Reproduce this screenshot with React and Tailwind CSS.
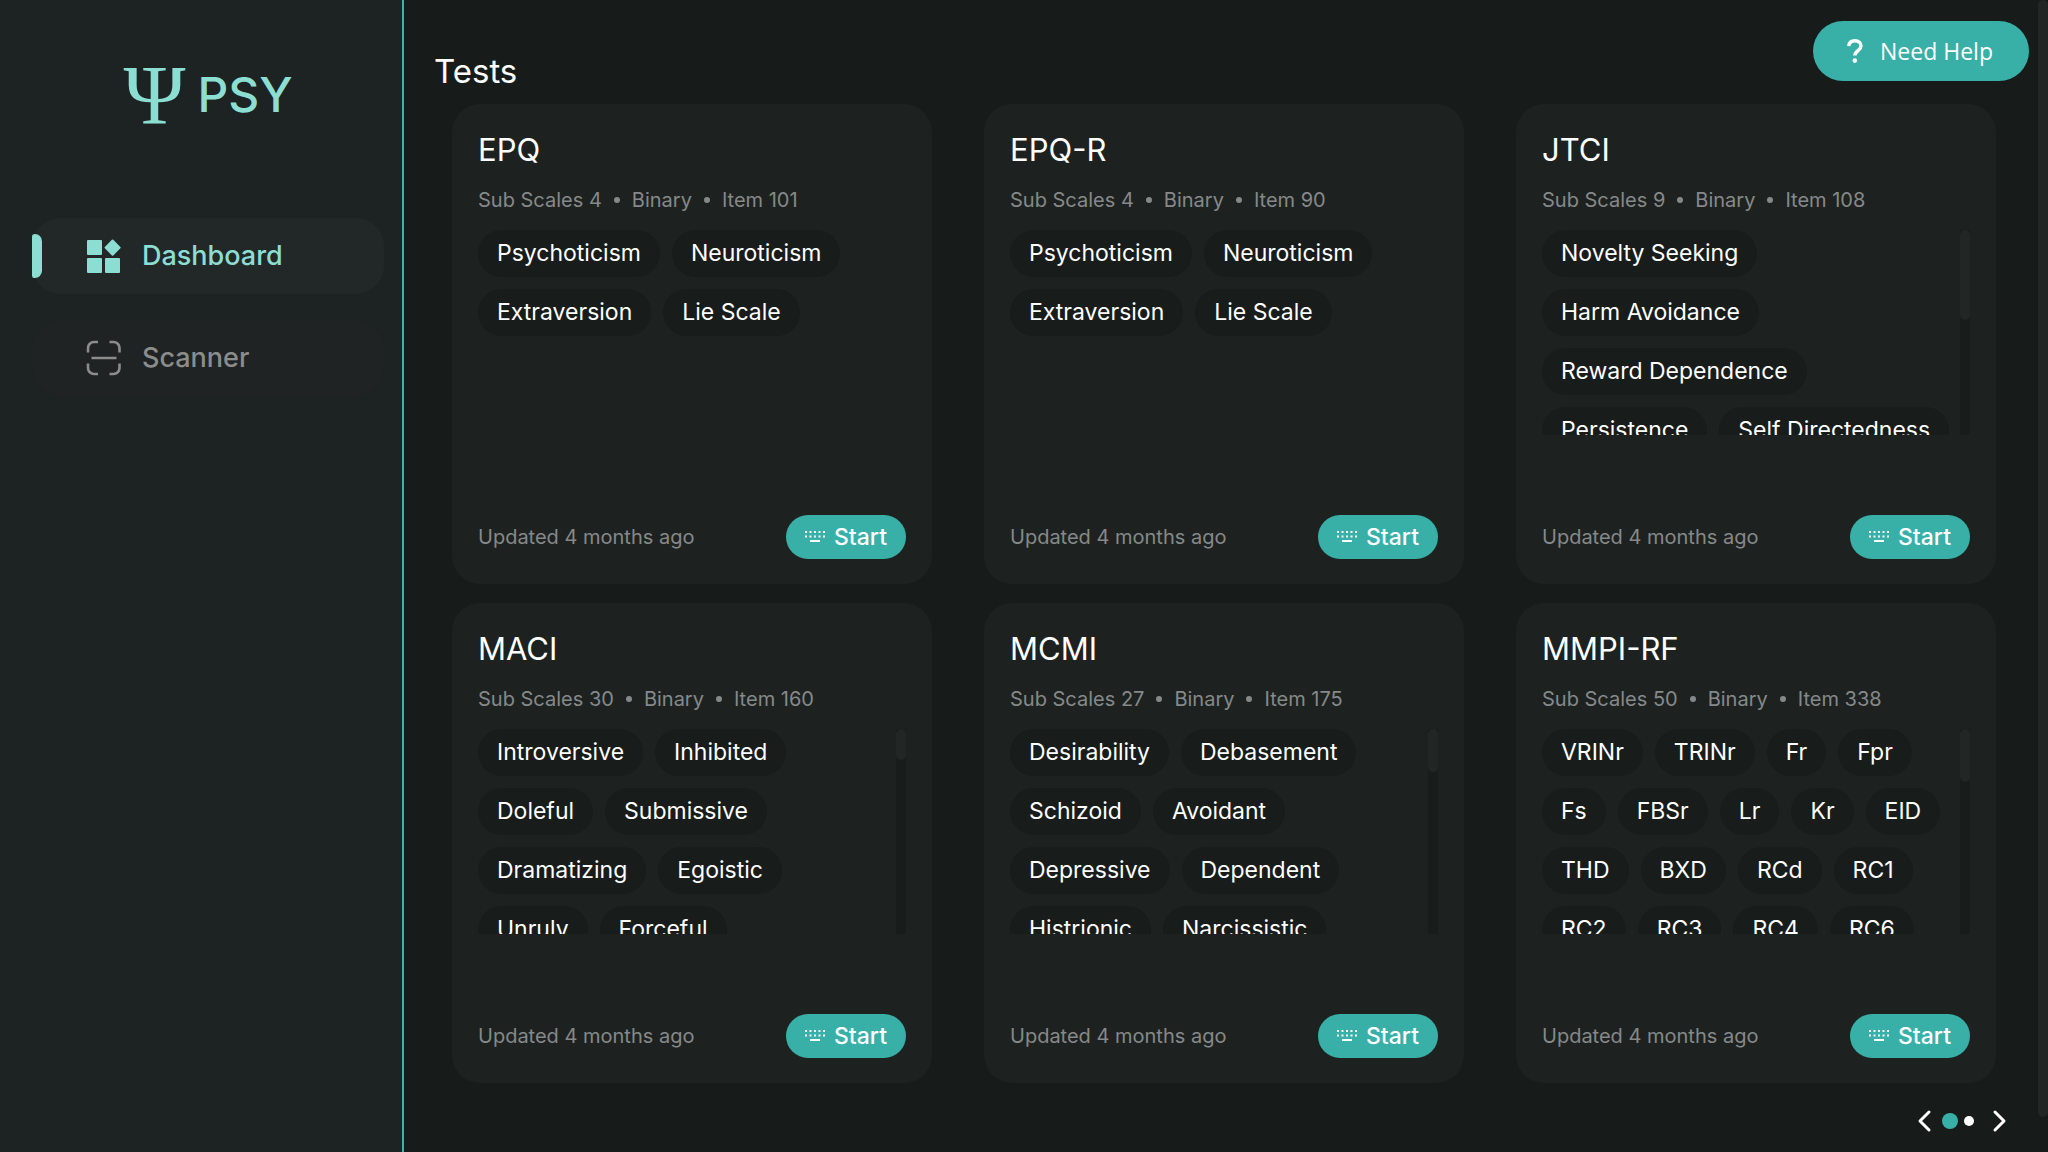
import React from "react";

const tests = [
  { name: "EPQ", scales: 4, items: 101, chips: ["Psychoticism", "Neuroticism", "Extraversion", "Lie Scale"] },
  { name: "EPQ-R", scales: 4, items: 90, chips: ["Psychoticism", "Neuroticism", "Extraversion", "Lie Scale"] },
  {
    name: "JTCI",
    scales: 9,
    items: 108,
    thumb: 44,
    chips: ["Novelty Seeking", "Harm Avoidance", "Reward Dependence", "Persistence", "Self Directedness"],
  },
  {
    name: "MACI",
    scales: 30,
    items: 160,
    thumb: 15,
    chips: ["Introversive", "Inhibited", "Doleful", "Submissive", "Dramatizing", "Egoistic", "Unruly", "Forceful"],
  },
  {
    name: "MCMI",
    scales: 27,
    items: 175,
    thumb: 21,
    chips: ["Desirability", "Debasement", "Schizoid", "Avoidant", "Depressive", "Dependent", "Histrionic", "Narcissistic"],
  },
  {
    name: "MMPI-RF",
    scales: 50,
    items: 338,
    thumb: 26,
    chips: [
      "VRINr", "TRINr", "Fr", "Fpr", "Fs", "FBSr", "Lr", "Kr", "EID",
      "THD", "BXD", "RCd", "RC1", "RC2", "RC3", "RC4", "RC6",
    ],
  },
];

function DashboardIcon() {
  return (
    <svg className="size-9 shrink-0" viewBox="0 0 36 36" fill="currentColor" aria-hidden="true">
      <rect x="1" y="2" width="15" height="15" rx="1" />
      <rect x="1" y="20" width="15" height="15" rx="1" />
      <rect x="19" y="20" width="15" height="15" rx="1" />
      <rect x="20.6" y="3.6" width="12" height="12" rx="1" transform="rotate(45 26.6 9.6)" />
    </svg>
  );
}

function ScannerIcon() {
  return (
    <svg className="size-9 shrink-0" viewBox="0 0 36 36" fill="none" stroke="currentColor" strokeWidth="2.6" aria-hidden="true">
      <path d="M2 12.5V8a6 6 0 0 1 6-6h4M23.5 2h4a6 6 0 0 1 6 6v4.5M33.5 23.5V28a6 6 0 0 1-6 6h-4M12 34H8a6 6 0 0 1-6-6v-4.5M5.500 18h25" />
    </svg>
  );
}

function HelpIcon() {
  return (
    <svg className="h-6 w-4 shrink-0" viewBox="0 0 16 24" fill="none" aria-hidden="true">
      <path d="M1.800 7.200C2 3.700 4.400 1.800 8 1.800c3.700 0 6 2.100 6 5.200 0 4.300-6.200 4.900-6.200 9.600" stroke="currentColor" strokeWidth="3.400" />
      <circle cx="7.800" cy="21.600" r="2.300" fill="currentColor" />
    </svg>
  );
}

function KeyboardIcon() {
  return (
    <svg className="h-3 w-5 shrink-0" viewBox="0 0 20 12" fill="currentColor" aria-hidden="true">
      {[0, 4.5, 9, 13.5, 18].map((x) => (
        <g key={x}>
          <rect x={x} y="0" width="2" height="2" />
          <rect x={x} y="4.5" width="2" height="2" />
        </g>
      ))}
      <rect x="5" y="9" width="10" height="2" />
    </svg>
  );
}

function Chevron({ d }) {
  return (
    <svg className="h-6 w-4" viewBox="0 0 16 24" fill="none" stroke="currentColor" strokeWidth="3" strokeLinecap="round" strokeLinejoin="round" aria-hidden="true">
      <path d={d} />
    </svg>
  );
}

function Sidebar() {
  return (
    <aside className="flex w-[404px] shrink-0 flex-col border-r-2 border-[#3cb5ab] bg-[#1d2222] pr-[18px] pl-8">
      <div className="flex h-[218px] items-start justify-center gap-3 pt-[52px] text-[#8cded3]">
        <span className="font-['Liberation_Serif'] text-[84px] leading-[88px]">Ψ</span>
        <span className="text-[48px] leading-[86px] font-medium">PSY</span>
      </div>
      <nav className="flex flex-col gap-[26px]">
        <a href="#dashboard" aria-current="page" className="flex h-[76px] items-center rounded-[28px] bg-[#222828] text-[27px] font-medium text-[#8cded3]">
          <span className="h-11 w-[10px] rounded-r-[10px] rounded-l-[4px] bg-[#8cded3]" />
          <span className="ml-11 flex items-center gap-[20px]">
            <DashboardIcon />
            Dashboard
          </span>
        </a>
        <a href="#scanner" className="flex h-[76px] items-center rounded-[28px] bg-[#202323] text-[27px] font-medium text-[#8b8d8d]">
          <span className="ml-[54px] flex items-center gap-[20px]">
            <ScannerIcon />
            Scanner
          </span>
        </a>
      </nav>
    </aside>
  );
}

function TestCard({ test }) {
  return (
    <article className="flex aspect-square flex-col rounded-[28px] bg-[#1d2221] px-[26px] pt-[25px] pb-[25px]">
      <h2 className="text-[31px] leading-[42px] text-white">{test.name}</h2>
      <p className="mt-[13px] flex items-center gap-3 text-[20px] leading-[32px] text-[#868989]">
        <span>Sub Scales {test.scales}</span>
        <span className="size-[6px] rounded-full bg-[#868989]" />
        <span>Binary</span>
        <span className="size-[6px] rounded-full bg-[#868989]" />
        <span>Item {test.items}</span>
      </p>
      <div className="mt-[14px] flex h-[205px] overflow-hidden">
        <ul className="flex flex-1 flex-wrap content-start gap-3 text-[23px] text-white">
          {test.chips.map((c) => (
            <li key={c} className="flex h-[47px] items-center rounded-[24px] bg-[#181c1b] px-[19px]">
              {c}
            </li>
          ))}
        </ul>
        {test.thumb && (
          <div className="w-[10px] shrink-0 bg-[#181c1b]">
            <div className="rounded-full bg-[#222726]" style={{ height: `${test.thumb}%` }} />
          </div>
        )}
      </div>
      <div className="mt-auto flex items-center justify-between">
        <span className="text-[20px] text-[#868989]">Updated 4 months ago</span>
        <button type="button" className="flex h-11 items-center gap-[9px] rounded-full bg-[#38b0a7] px-[19px] text-[23px] font-medium text-white">
          <KeyboardIcon />
          Start
        </button>
      </div>
    </article>
  );
}

export default function App() {
  return (
    <div className="flex min-h-screen bg-[#171c1b] font-['Inter',sans-serif]">
      <Sidebar />
      <main className="flex min-w-0 flex-1 flex-col pr-[42px] pl-12">
        <h1 className="-ml-[18px] pt-[50px] text-[33px] leading-[42px] text-white">Tests</h1>
        <section className="mt-3 grid grid-cols-3 gap-x-[52px] gap-y-[19px]">
          {tests.map((t) => (
            <TestCard key={t.name} test={t} />
          ))}
        </section>
        <nav aria-label="Pages" className="-mr-3 mt-[26px] flex items-center justify-end text-white">
          <button type="button" aria-label="Previous page"><Chevron d="M13 3L4 12l9 9" /></button>
          <button type="button" aria-label="Page 1" className="ml-[10px] size-4 rounded-full bg-[#38b0a7]" />
          <button type="button" aria-label="Page 2" className="ml-[6px] size-[10px] rounded-full bg-white" />
          <button type="button" aria-label="Next page" className="ml-[18px]"><Chevron d="M3 3l9 9-9 9" /></button>
        </nav>
      </main>
      <div className="w-[10px] shrink-0">
        <div className="h-[97vh] rounded-full bg-[#222726]" />
      </div>
      <button type="button" className="fixed top-[21px] right-[19px] flex h-[60px] items-center gap-[17px] rounded-full bg-[#38b0a7] pr-9 pl-[34px] font-['Open_Sans'] text-[23px] font-medium text-white">
        <HelpIcon />
        Need Help
      </button>
    </div>
  );
}
